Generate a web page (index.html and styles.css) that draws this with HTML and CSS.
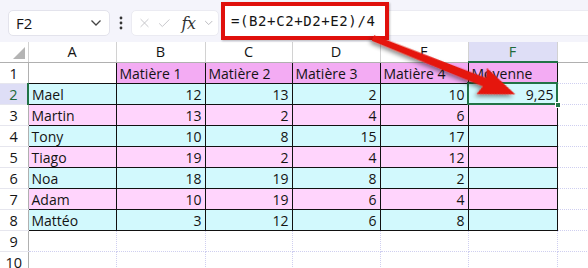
FILE: index.html
```html
<!DOCTYPE html>
<html lang="fr">
<head>
<meta charset="utf-8">
<title>Moyenne</title>
<link rel="stylesheet" href="styles.css">
</head>
<body>
<div class="page">
  <div class="toolbar">
    <div class="namebox">
      <span class="ref">F2</span>
      <svg class="chev" width="12" height="8" viewBox="0 0 12 8"><path d="M1.5 1.5 L6 6 L10.5 1.5" fill="none" stroke="#444" stroke-width="1.3"/></svg>
    </div>
    <svg class="kebab" width="4" height="14" viewBox="0 0 4 14"><circle cx="2" cy="2" r="1.4" fill="#333"/><circle cx="2" cy="7" r="1.4" fill="#333"/><circle cx="2" cy="12" r="1.4" fill="#333"/></svg>
    <div class="fxbox">
      <svg width="14" height="14" viewBox="0 0 14 14"><path d="M2 2 L12 12 M12 2 L2 12" stroke="#c4c4c8" stroke-width="1.2" fill="none"/></svg>
      <svg width="16" height="14" viewBox="0 0 16 14"><path d="M1.5 7.5 L5.5 11.5 L14.5 2.5" stroke="#c4c4c8" stroke-width="1.2" fill="none"/></svg>
      <span class="fx">fx</span>
      <svg width="12" height="8" viewBox="0 0 12 8"><path d="M1.5 1.5 L6 6 L10.5 1.5" fill="none" stroke="#b8b8bc" stroke-width="1.2"/></svg>
    </div>
    <div class="formula"></div>
    <div class="redbox">=(B2+C2+D2+E2)/4</div>
  </div>

  <table class="sheet">
    <colgroup>
      <col class="c-rh"><col class="c-a"><col class="c-b"><col class="c-c"><col class="c-d"><col class="c-e"><col class="c-f"><col class="c-g">
    </colgroup>
    <tr class="hdr">
      <th class="corner"><span class="tri"></span></th>
      <th>A</th><th>B</th><th>C</th><th>D</th><th>E</th><th class="sel">F</th><th class="blank"></th>
    </tr>
    <tr>
      <th class="rh">1</th>
      <td></td>
      <td class="h">Matière 1</td><td class="h">Matière 2</td><td class="h">Matière 3</td><td class="h">Matière 4</td><td class="h">Moyenne</td>
      <td></td>
    </tr>
    <tr class="cy">
      <th class="rh selrow">2</th>
      <td class="d name">Mael</td><td class="d n">12</td><td class="d n">13</td><td class="d n">2</td><td class="d n">10</td><td class="d n active">9,25</td>
      <td></td>
    </tr>
    <tr class="pk">
      <th class="rh">3</th>
      <td class="d name">Martin</td><td class="d n">13</td><td class="d n">2</td><td class="d n">4</td><td class="d n">6</td><td class="d n"></td>
      <td></td>
    </tr>
    <tr class="cy">
      <th class="rh">4</th>
      <td class="d name">Tony</td><td class="d n">10</td><td class="d n">8</td><td class="d n">15</td><td class="d n">17</td><td class="d n"></td>
      <td></td>
    </tr>
    <tr class="pk">
      <th class="rh">5</th>
      <td class="d name">Tiago</td><td class="d n">19</td><td class="d n">2</td><td class="d n">4</td><td class="d n">12</td><td class="d n"></td>
      <td></td>
    </tr>
    <tr class="cy">
      <th class="rh">6</th>
      <td class="d name">Noa</td><td class="d n">18</td><td class="d n">19</td><td class="d n">8</td><td class="d n">2</td><td class="d n"></td>
      <td></td>
    </tr>
    <tr class="pk">
      <th class="rh">7</th>
      <td class="d name">Adam</td><td class="d n">10</td><td class="d n">19</td><td class="d n">6</td><td class="d n">4</td><td class="d n"></td>
      <td></td>
    </tr>
    <tr class="cy">
      <th class="rh">8</th>
      <td class="d name">Mattéo</td><td class="d n">3</td><td class="d n">12</td><td class="d n">6</td><td class="d n">8</td><td class="d n"></td>
      <td></td>
    </tr>
    <tr>
      <th class="rh">9</th>
      <td></td><td></td><td></td><td></td><td></td><td></td><td></td>
    </tr>
    <tr>
      <th class="rh">10</th>
      <td></td><td></td><td></td><td></td><td></td><td></td><td></td>
    </tr>
  </table>

  <svg class="arrow" width="588" height="268" viewBox="0 0 588 268">
    <defs>
      <filter id="sh" x="-20%" y="-20%" width="140%" height="160%">
        <feDropShadow dx="-1" dy="3" stdDeviation="2.2" flood-color="#000" flood-opacity="0.45"/>
      </filter>
    </defs>
    <polygon filter="url(#sh)" fill="#e5150b"
      points="0,-3 120,-4.5 117,-14 153,0 117,14 120,4.5 0,3"
      transform="translate(373 38) rotate(21.6)"/>
  </svg>
</div>
</body>
</html>
```

FILE: styles.css
```css
html, body {
  margin: 0;
  padding: 0;
  background: #ffffff;
}
.page {
  position: relative;
  width: 588px;
  height: 268px;
  overflow: hidden;
  font-family: "Open Sans", "Liberation Sans", sans-serif;
  color: #141414;
}

/* toolbar */
.toolbar {
  position: relative;
  height: 42px;
  box-sizing: border-box;
  padding: 10px 0 6px 8px;
  background: #f4f4fb;
  display: flex;
  align-items: stretch;
}
.namebox {
  width: 102px;
  box-sizing: border-box;
  background: #fff;
  border: 1px solid #e3e3ec;
  border-radius: 5px;
  display: flex;
  align-items: center;
  justify-content: space-between;
  padding: 0 7px 0 7px;
}
.ref {
  font-size: 15px;
  color: #141414;
}
.kebab {
  align-self: center;
  margin: 0 8px 0 9px;
}
.fxbox {
  width: 88px;
  box-sizing: border-box;
  background: #fff;
  border: 1px solid #ebebf2;
  border-radius: 5px;
  display: flex;
  align-items: center;
  gap: 8px;
  padding: 0 5px 0 7px;
}
.fx {
  font-family: "DejaVu Serif", "Liberation Serif", serif;
  font-style: italic;
  font-size: 16px;
  color: #333;
  letter-spacing: -0.5px;
  margin-left: 3px;
}
.formula {
  flex: 1;
  margin-left: 4px;
  background: #fff;
  border-top: 1px solid #ebebf2;
  border-bottom: 1px solid #ebebf2;
}
.redbox {
  position: absolute;
  left: 221px;
  top: 2px;
  width: 168px;
  height: 38px;
  box-sizing: border-box;
  border: 4px solid #e0100c;
  background: #fff;
  padding-left: 6px;
  display: flex;
  align-items: center;
  font-family: "DejaVu Sans Mono", "Liberation Mono", monospace;
  font-size: 14px;
  letter-spacing: 0.6px;
  color: #141414;
  box-shadow: 1px 1px 2px rgba(0,0,0,0.25);
}

/* sheet */
.sheet {
  border-collapse: collapse;
  table-layout: fixed;
  width: 680px;
}
.c-rh { width: 28px; }
.c-a { width: 88px; }
.c-b { width: 89px; }
.c-c { width: 87px; }
.c-d { width: 88px; }
.c-e { width: 88px; }
.c-f { width: 89px; }
.c-g { width: 123px; }

.sheet th, .sheet td {
  padding: 0;
  box-sizing: border-box;
}
.sheet td {
  height: 21px;
  border: 1px dotted #cfcff0;
  font-size: 14px;
  line-height: 18px;
  vertical-align: bottom;
  white-space: nowrap;
  overflow: visible;
}
.hdr th {
  height: 20px;
  font-weight: normal;
  font-size: 14.5px;
  line-height: 18px;
  text-align: center;
  color: #141414;
  border-right: 1px solid #d2d2d2;
  border-bottom: 1px solid #b0b0b0;
  background: #fff;
}
.hdr th.blank {
  border-right: none;
}
.hdr th.sel {
  background: #dedef6;
  color: #1e6b3c;
  border-bottom: 2px solid #217346;
}
.corner {
  position: relative;
}
.tri {
  position: absolute;
  right: 3px;
  bottom: 3px;
  width: 0;
  height: 0;
  border-left: 12px solid transparent;
  border-bottom: 12px solid #b4b4b4;
}
.rh {
  font-weight: normal;
  font-size: 14.5px;
  line-height: 18px;
  text-align: center;
  vertical-align: bottom;
  height: 21px;
  border-right: 1px solid #b0b0b0;
  border-bottom: 1px solid #e6e6ee;
  background: #fff;
}
.rh.selrow {
  background: #dedef6;
  color: #1e6b3c;
  border-right: 2px solid #217346;
}

.sheet td.h {
  background: #f3abf3;
  border: 1px solid #111;
  padding-left: 3px;
}
.sheet td.d {
  border: 1px solid #111;
}
.cy td.d { background: #d2f9fd; }
.pk td.d { background: #ffd4fc; }
.sheet td.name {
  padding-left: 3px;
}
.sheet td.n {
  text-align: right;
  padding-right: 3px;
}
.sheet td.active {
  position: relative;
  outline: 2px solid #217346;
  outline-offset: -1px;
}
.sheet td.active::after {
  content: "";
  position: absolute;
  right: -4px;
  bottom: -4px;
  width: 6px;
  height: 6px;
  background: #217346;
  border: 1px solid #fff;
  box-sizing: border-box;
}

.arrow {
  position: absolute;
  left: 0;
  top: 0;
  pointer-events: none;
}
```
